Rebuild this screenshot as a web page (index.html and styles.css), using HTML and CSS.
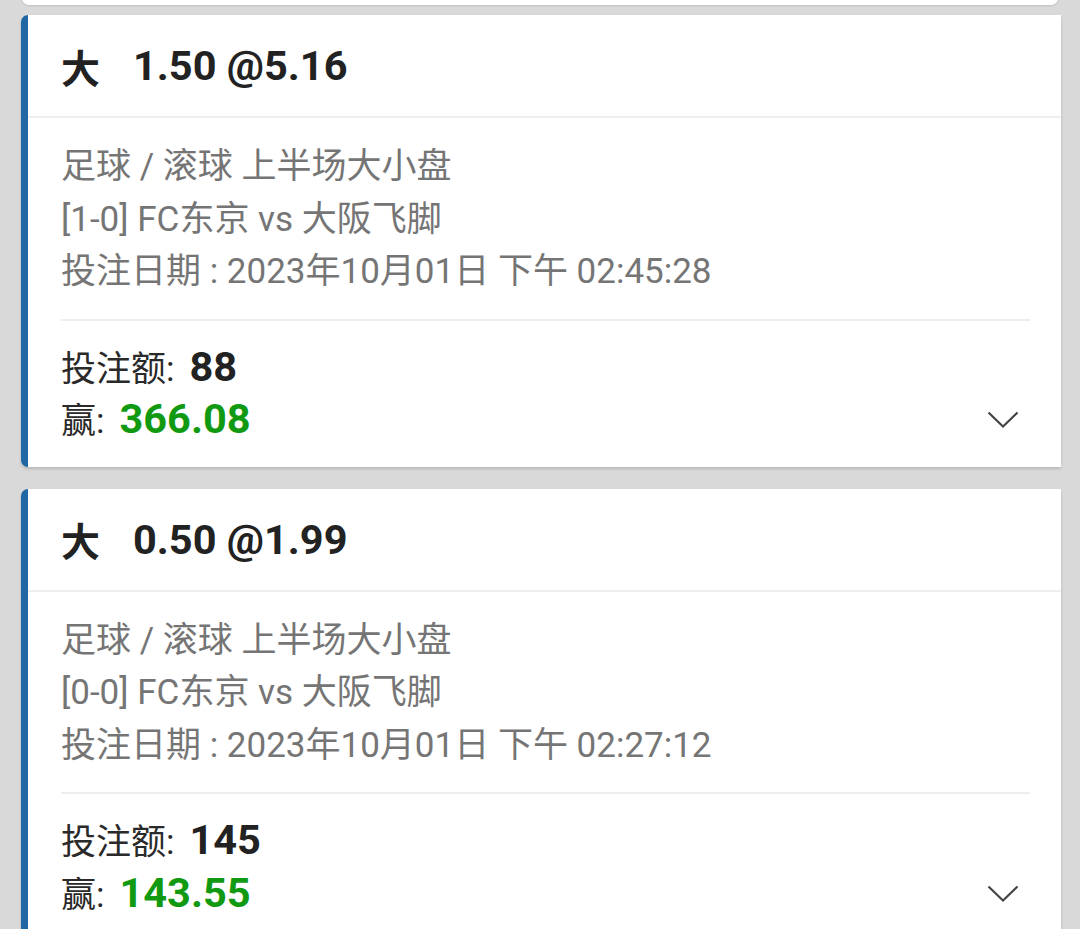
FILE: index.html
```html
<!DOCTYPE html>
<html lang="zh">
<head>
<meta charset="utf-8">
<link rel="stylesheet" href="styles.css">
</head>
<body>
<div class="list">
  <div class="prev-card"></div>

  <div class="card">
    <div class="card-head">
      <span class="side">大</span><span class="odds">1.50 @5.16</span>
    </div>
    <div class="card-body">
      <div class="info">
        <div class="line">足球 / 滚球 上半场大小盘</div>
        <div class="line">[1-0] FC东京 vs 大阪飞脚</div>
        <div class="line">投注日期 : 2023年10月01日 下午 02:45:28</div>
      </div>
      <div class="amounts">
        <div class="amt-lines">
          <div class="line dark">投注额:<b class="stake">88</b></div>
          <div class="line dark">赢:<b class="win">366.08</b></div>
        </div>
        <svg class="chevron" width="32" height="18" viewBox="0 0 32 18"><path d="M1.5 1.5 L16 15.5 L30.5 1.5" fill="none" stroke="#444" stroke-width="2.2"/></svg>
      </div>
    </div>
  </div>

  <div class="card">
    <div class="card-head">
      <span class="side">大</span><span class="odds">0.50 @1.99</span>
    </div>
    <div class="card-body">
      <div class="info">
        <div class="line">足球 / 滚球 上半场大小盘</div>
        <div class="line">[0-0] FC东京 vs 大阪飞脚</div>
        <div class="line">投注日期 : 2023年10月01日 下午 02:27:12</div>
      </div>
      <div class="amounts">
        <div class="amt-lines">
          <div class="line dark">投注额:<b class="stake">145</b></div>
          <div class="line dark">赢:<b class="win">143.55</b></div>
        </div>
        <svg class="chevron" width="32" height="18" viewBox="0 0 32 18"><path d="M1.5 1.5 L16 15.5 L30.5 1.5" fill="none" stroke="#444" stroke-width="2.2"/></svg>
      </div>
    </div>
  </div>
</div>
</body>
</html>
```

FILE: styles.css
```css
html, body {
  margin: 0;
  padding: 0;
  background: #d9d9d9;
  font-family: Roboto, "Noto Sans CJK SC", sans-serif;
  overflow: hidden;
}

.list {
  display: flex;
  flex-direction: column;
  gap: 22px;
  padding: 0 19px 0 21px;
  width: 1080px;
  box-sizing: border-box;
}

.prev-card {
  height: 5px;
  margin: -12px 3px 0 1px;
  padding-top: 12px;
  background: #fff;
  border-radius: 0 0 7px 7px;
  box-shadow: 0 1px 2px rgba(0,0,0,0.12);
  margin-bottom: -12px;
}

.card {
  background: #fff;
  border-left: 7px solid #1f68a3;
  border-radius: 7px 0 0 7px;
  box-shadow: 0 2px 3px rgba(0,0,0,0.15);
}

.card-head {
  height: 101px;
  display: flex;
  align-items: center;
  padding-left: 33px;
  border-bottom: 2px solid #efefef;
  color: #222;
  font-weight: 700;
  font-size: 41.5px;
}

.side {
  font-size: 39px;
  margin-right: 33px;
}

.card-body {
  padding: 0 31px 0 33px;
}

.info {
  padding: 23px 0 20px;
  border-bottom: 2px solid #eeeeee;
  color: #757575;
}

.line {
  font-size: 35px;
  line-height: 52.5px;
  height: 52.5px;
  white-space: nowrap;
}

.amounts {
  display: flex;
  align-items: center;
  justify-content: space-between;
  padding: 20px 0 21px;
}

.dark {
  color: #2a2a2a;
}

.stake {
  font-size: 41.5px;
  font-weight: 700;
  color: #222;
  margin-left: 15px;
}

.win {
  font-size: 41.5px;
  font-weight: 700;
  color: #119a11;
  margin-left: 15px;
}

.chevron {
  margin-top: 54px;
  margin-right: 11px;
}
```
